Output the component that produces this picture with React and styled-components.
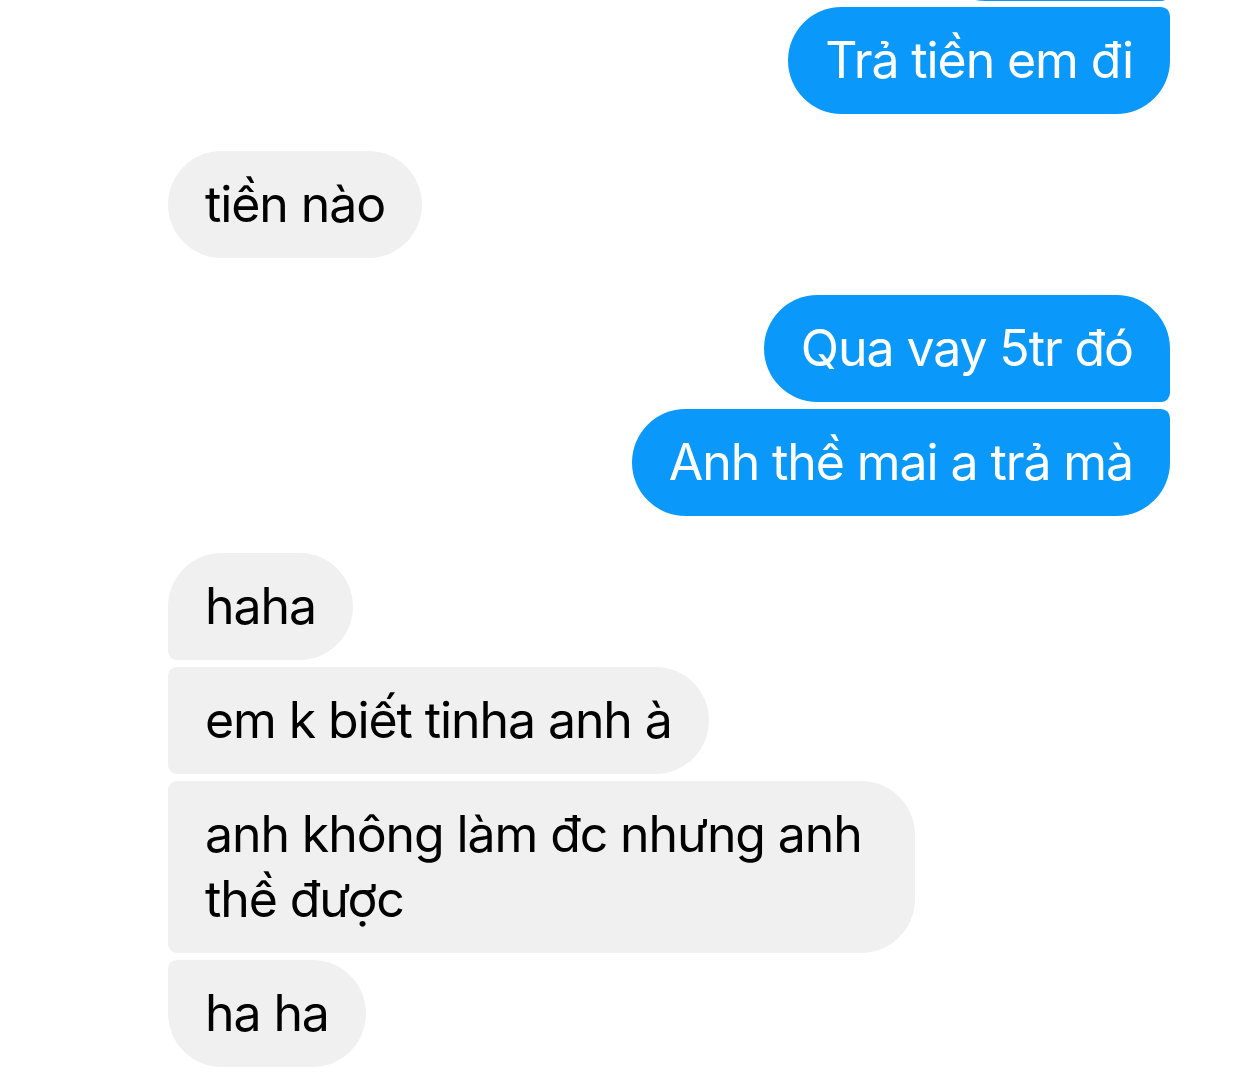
import React from "react";
import styled, { createGlobalStyle, css } from "styled-components";

const Global = createGlobalStyle`
  html, body { margin: 0; padding: 0; background: #ffffff; }
  body { font-family: Inter, "Noto Sans", Roboto, sans-serif; overflow: hidden; }
`;

const Screen = styled.div`
  width: 1242px;
  height: 1086px;
  overflow: hidden;
  background: #fff;
`;

const Thread = styled.div`
  display: flex;
  flex-direction: column;
  margin-top: -106px;
  padding: 0 72px 0 168px;
`;

const Group = styled.div`
  display: flex;
  flex-direction: column;
  align-items: ${(p) => (p.$out ? "flex-end" : "flex-start")};
  gap: 7px;
  & + & { margin-top: 37px; }
`;

const BIG = 54;
const SMALL = 9;

const Bubble = styled.div`
  box-sizing: border-box;
  max-width: 747px;
  min-height: 107px;
  padding: 21px 37px 21px 37px;
  font-size: 50px;
  line-height: 65px;
  letter-spacing: -1.1px;
  ${(p) =>
    p.$out
      ? css`
          background: #0a98fa;
          color: #ffffff;
          border-radius: ${BIG}px ${p.$top ? BIG : SMALL}px ${p.$bottom ? BIG : SMALL}px ${BIG}px;
        `
      : css`
          background: #f0f0f0;
          color: #000000;
          border-radius: ${p.$top ? BIG : SMALL}px ${BIG}px ${BIG}px ${p.$bottom ? BIG : SMALL}px;
        `}
`;

const CutBubble = styled(Bubble)`
  width: 238px;
  margin-bottom: -1px;
`;

const groups = [
  { out: true, cut: true, msgs: ["", "Trả tiền em đi"] },
  { out: false, msgs: ["tiền nào"] },
  { out: true, msgs: ["Qua vay 5tr đó", "Anh thề mai a trả mà"] },
  {
    out: false,
    msgs: ["haha", "em k biết tinha anh à", "anh không làm đc nhưng anh thề được", "ha ha"],
  },
];

export default function App() {
  return (
    <Screen>
      <Global />
      <Thread>
        {groups.map((g, gi) => (
          <Group key={gi} $out={g.out}>
            {g.msgs.map((m, i) => {
              const props = {
                $out: g.out,
                $top: i === 0,
                $bottom: i === g.msgs.length - 1,
              };
              return g.cut && i === 0 ? (
                <CutBubble key={i} {...props} aria-hidden="true" />
              ) : (
                <Bubble key={i} {...props}>
                  {m}
                </Bubble>
              );
            })}
          </Group>
        ))}
      </Thread>
    </Screen>
  );
}
